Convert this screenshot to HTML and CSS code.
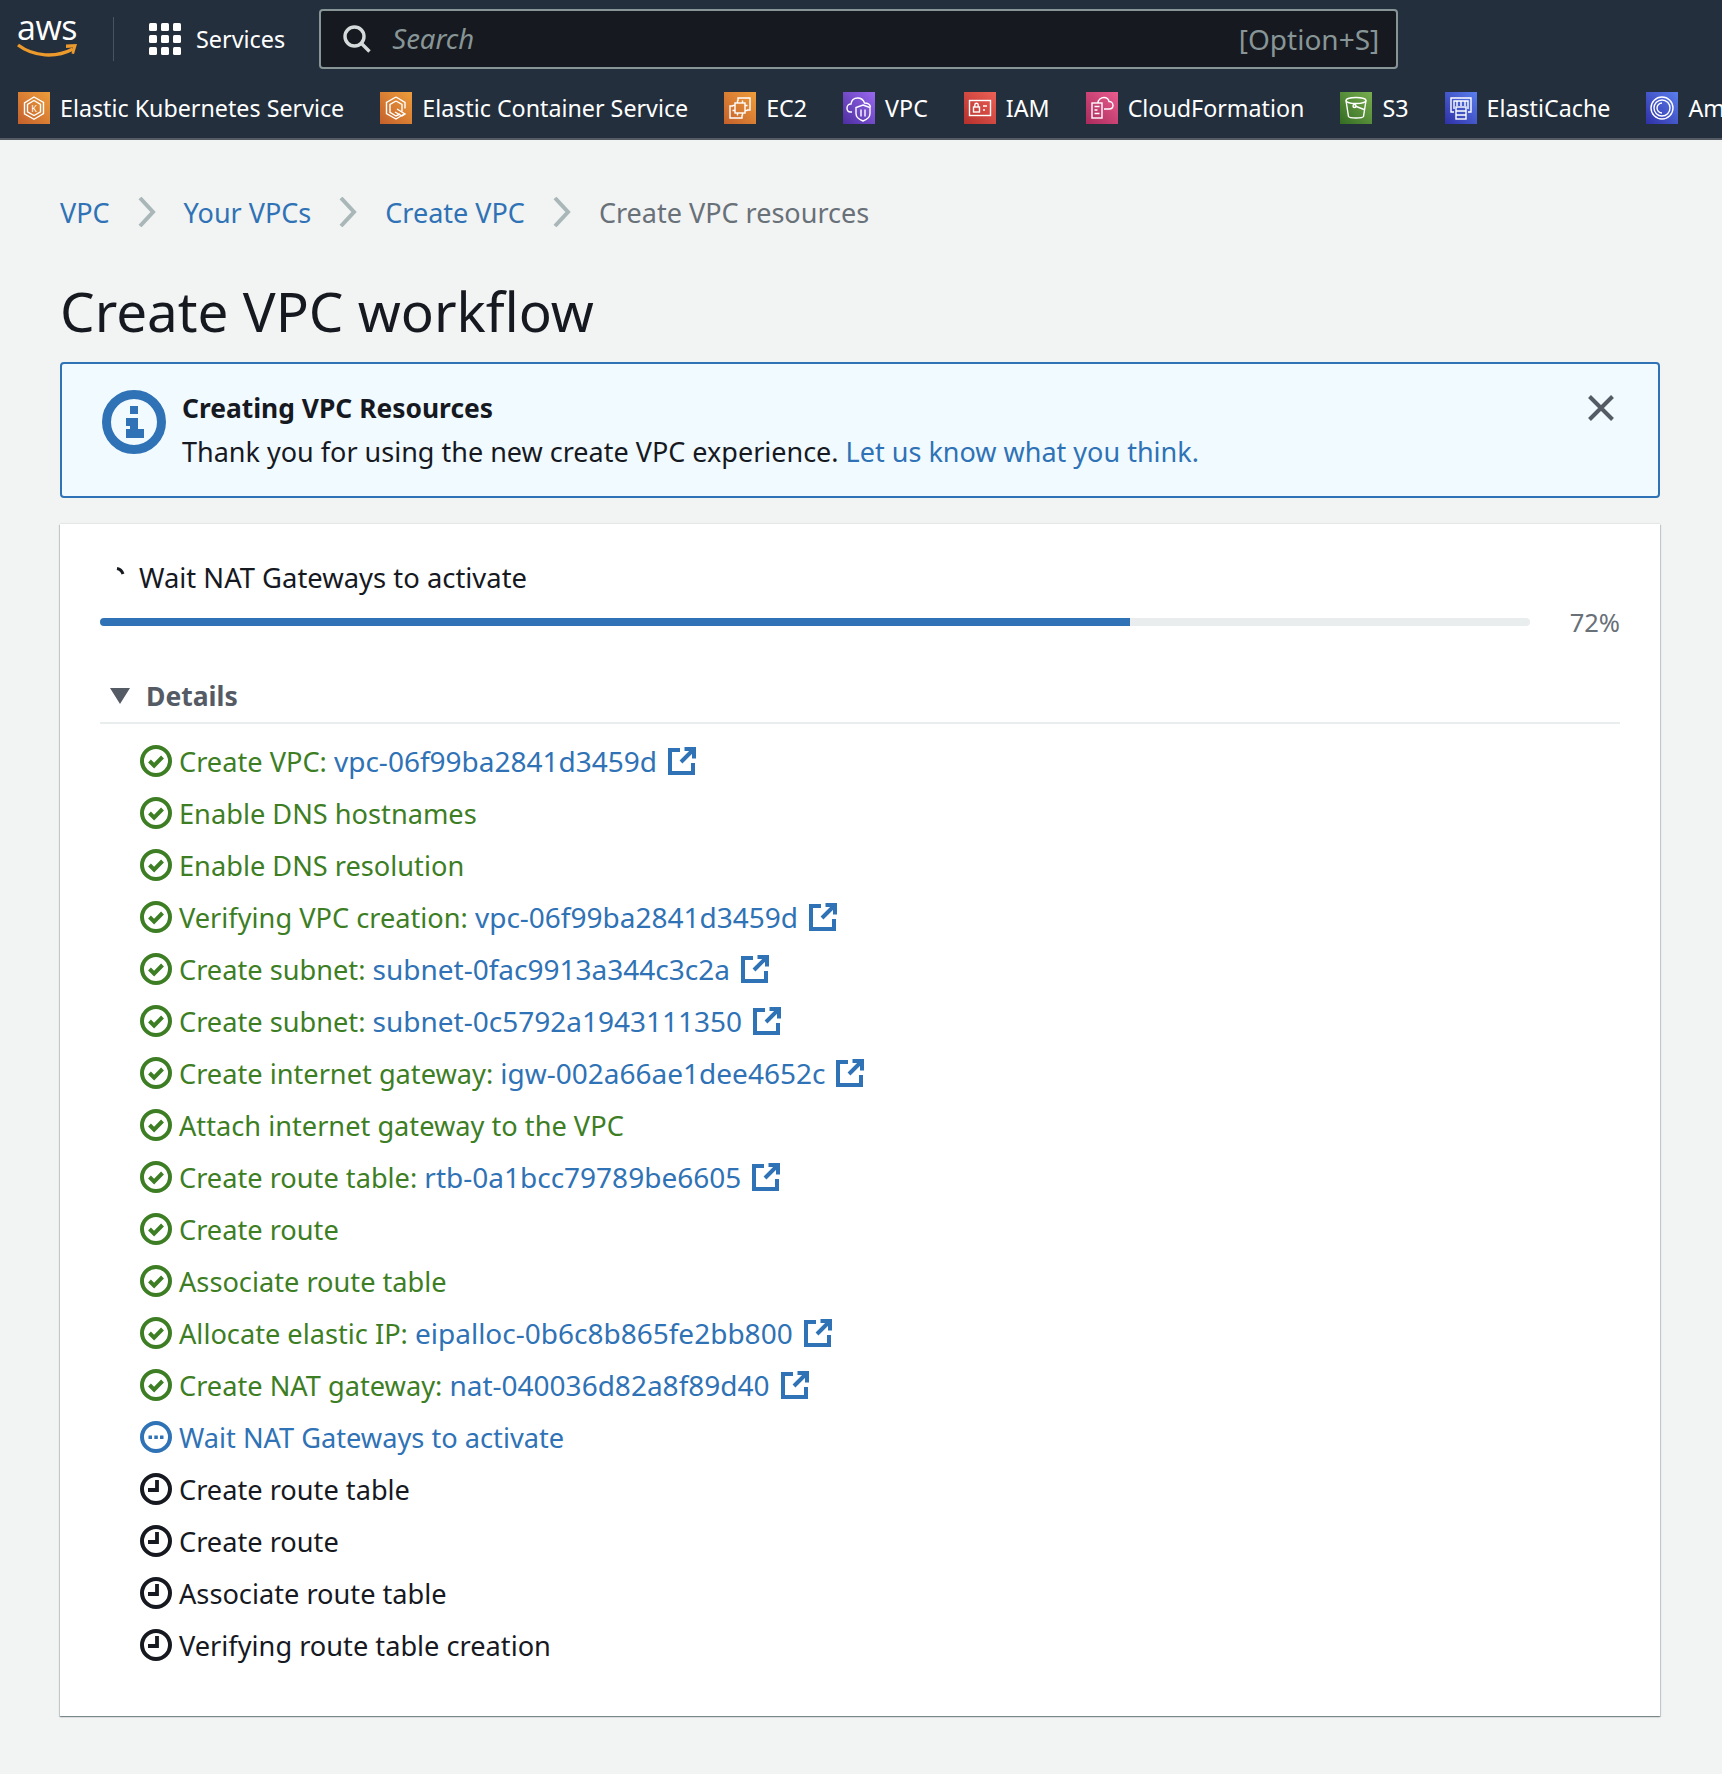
FILE: index.html
```html
<!DOCTYPE html>
<html lang="en">

<head>
  <meta charset="UTF-8">
  <title>Create VPC workflow</title>
  <link rel="stylesheet" href="styles.css">
</head>

<body>
  <svg class="defs" width="0" height="0">
    <symbol id="ok" viewBox="0 0 32 32">
      <circle cx="16" cy="16" r="14" fill="none" stroke="currentColor" stroke-width="4" />
      <path d="M9.5 16l4.6 4.6 8.4-8.6" fill="none" stroke="currentColor" stroke-width="4" />
    </symbol>
    <symbol id="wait" viewBox="0 0 32 32">
      <circle cx="16" cy="16" r="14" fill="none" stroke="currentColor" stroke-width="4" />
      <path d="M8.5 14.500h3.500v3.500h-3.500zM14.300 14.500h3.500v3.500h-3.500zM20 14.500h3.500v3.500h-3.500z" fill="currentColor" />
    </symbol>
    <symbol id="clock" viewBox="0 0 32 32">
      <circle cx="16" cy="16" r="14" fill="none" stroke="currentColor" stroke-width="4" />
      <path d="M17 7v10H8" fill="none" stroke="currentColor" stroke-width="3.8" />
    </symbol>
    <symbol id="ext" viewBox="0 0 28 28">
      <path d="M12 3H2v23h23V16" fill="none" stroke="currentColor" stroke-width="4" />
      <path d="M13 15L25 3M16.500 2H26v9.500" fill="none" stroke="currentColor" stroke-width="4" />
    </symbol>
  </svg>

  <header class="top">
    <div class="top-row">
      <a class="logo">
        <span class="logo-text">aws</span>
        <svg class="smile" viewBox="0 0 62 16" width="62" height="16">
          <path d="M1 2c16 12 38 13 55 4" fill="none" stroke="#ec9a2c" stroke-width="3.400" />
          <path d="M49 1.500l11-.5-3 10-2.500-.5 1.500-6-7 .5z" fill="#ec9a2c" />
        </svg>
      </a>
      <a class="services">
        <svg viewBox="0 0 32 32" width="32" height="32" fill="#fff">
          <rect x="0" y="0" width="8" height="8" rx="1.500" />
          <rect x="12" y="0" width="8" height="8" rx="1.500" />
          <rect x="24" y="0" width="8" height="8" rx="1.500" />
          <rect x="0" y="12" width="8" height="8" rx="1.500" />
          <rect x="12" y="12" width="8" height="8" rx="1.500" />
          <rect x="24" y="12" width="8" height="8" rx="1.500" />
          <rect x="0" y="24" width="8" height="8" rx="1.500" />
          <rect x="12" y="24" width="8" height="8" rx="1.500" />
          <rect x="24" y="24" width="8" height="8" rx="1.500" />
        </svg>
        <span>Services</span>
      </a>
      <div class="search">
        <svg viewBox="0 0 28 28" width="28" height="28" fill="none" stroke="#d5dbdb" stroke-width="3.400">
          <circle cx="11.500" cy="11.500" r="9.500" />
          <path d="M18 18l8.500 8.500" />
        </svg>
        <span class="search-text">Search</span>
        <span class="search-key">[Option+S]</span>
      </div>
    </div>

    <nav class="shortcuts">
      <a class="shortcut">
        <span class="svc orange">
          <svg viewBox="0 0 32 32" fill="none" stroke="#fff" stroke-width="1.400">
            <path d="M16 5l9.500 5.500v11L19 25.500l-3 1.800-9.500-5.500v-11z" />
            <path d="M16 8.500l6.500 3.800v7.500L16 23.500l-6.500-3.700v-7.500z" />
            <text x="16" y="19.500" class="svc-letter">K</text>
          </svg>
        </span>
        Elastic Kubernetes Service
      </a>
      <a class="shortcut">
        <span class="svc orange">
          <svg viewBox="0 0 32 32" fill="none" stroke="#fff" stroke-width="1.400">
            <path d="M16 5l9 5.500v6M25 21.500l-9 5.500-9.500-5.500v-11L16 5" />
            <path d="M16 9l6 3.500v7M20 22l-4 2-6-3.700v-7.800L16 9" />
            <path d="M17 17l8 5-3 2-7-4" />
          </svg>
        </span>
        Elastic Container Service
      </a>
      <a class="shortcut">
        <span class="svc orange">
          <svg viewBox="0 0 32 32" fill="none" stroke="#fff" stroke-width="1.400">
            <path d="M14 9V6h12v12h-3" />
            <path d="M9 14H6v12h12v-3" />
            <rect x="11" y="11" width="10" height="10" />
            <path d="M13.500 11V8.500M18.500 11V8.500M13.500 23.500V21M18.500 23.500V21M8.500 13.500H11M8.500 18.500H11M21 13.500h2.500M21 18.500h2.500" />
          </svg>
        </span>
        EC2
      </a>
      <a class="shortcut">
        <span class="svc purple">
          <svg viewBox="0 0 32 32" fill="none" stroke="#fff" stroke-width="1.400">
            <path d="M9 20H7.500C5 20 4 18 4 16c0-2 1.500-4 4-4 .5-3.500 3-6 6.500-6s6 2 7 5c3 0 5.500 1.500 6 4" />
            <path d="M20 13l7 2.500v6c0 3.500-3 6-7 7.500-4-1.500-7-4-7-7.500v-6z" />
            <path d="M18 17.500v7M22 17.500v7" />
          </svg>
        </span>
        VPC
      </a>
      <a class="shortcut">
        <span class="svc red">
          <svg viewBox="0 0 32 32" fill="none" stroke="#fff" stroke-width="1.400">
            <rect x="5.500" y="8.500" width="21" height="15" />
            <rect x="9.500" y="15" width="6" height="5" />
            <path d="M10.800 15v-2a1.700 1.700 0 0 1 3.400 0v2M19 14h4M19 18h2" />
          </svg>
        </span>
        IAM
      </a>
      <a class="shortcut">
        <span class="svc pink">
          <svg viewBox="0 0 32 32" fill="none" stroke="#fff" stroke-width="1.400">
            <rect x="6" y="11" width="10" height="15" />
            <path d="M8.500 14.500h5M8.500 18h3M8.500 21.500h5" />
            <path d="M12 11c0-3.500 3-5.500 6-5.500 2.500 0 4.500 1.500 5 4 2.500 0 4 2 4 4 0 2.500-2 3.500-4 3.500h-5" />
          </svg>
        </span>
        CloudFormation
      </a>
      <a class="shortcut">
        <span class="svc green">
          <svg viewBox="0 0 32 32" fill="none" stroke="#fff" stroke-width="1.400">
            <ellipse cx="16" cy="8.500" rx="10" ry="3" />
            <path d="M6 8.500l2.500 16c1 2 14 2 15 0L26 8.500" />
            <path d="M15 14l9 3.500" />
            <circle cx="14.500" cy="14" r="1.500" />
          </svg>
        </span>
        S3
      </a>
      <a class="shortcut">
        <span class="svc blue">
          <svg viewBox="0 0 32 32" fill="none" stroke="#fff" stroke-width="1.400">
            <path d="M9 20H6V6h20v14h-3" />
            <path d="M9 17V9h14v8M12 9v5M16 9v5M20 9v5" />
            <rect x="11" y="15" width="10" height="12" />
            <path d="M11 19h10M11 23h10" />
          </svg>
        </span>
        ElastiCache
      </a>
      <a class="shortcut">
        <span class="svc blue">
          <svg viewBox="0 0 32 32" fill="none" stroke="#fff" stroke-width="1.400">
            <circle cx="16" cy="16" r="11" />
            <circle cx="16" cy="16" r="8" />
            <path d="M16 11a5 5 0 0 0 0 10" />
          </svg>
        </span>
        Am
      </a>
    </nav>
  </header>

  <main class="page">
    <div class="crumbs">
      <a class="link">VPC</a>
      <svg class="chev" viewBox="0 0 18 30"><path d="M2 1l13 14L2 29" /></svg>
      <a class="link">Your VPCs</a>
      <svg class="chev" viewBox="0 0 18 30"><path d="M2 1l13 14L2 29" /></svg>
      <a class="link">Create VPC</a>
      <svg class="chev" viewBox="0 0 18 30"><path d="M2 1l13 14L2 29" /></svg>
      <span class="crumb-now">Create VPC resources</span>
    </div>

    <h1>Create VPC workflow</h1>

    <section class="banner">
      <svg class="banner-icon" viewBox="0 0 64 64">
        <circle cx="32" cy="32" r="27.500" fill="none" stroke="#2f72b5" stroke-width="9" />
        <path d="M28 16h8v8h-8zM24 28h12v11h6v9H24v-9h4v-3h-4z" fill="#2f72b5" />
      </svg>
      <div class="banner-body">
        <div class="banner-title">Creating VPC Resources</div>
        <div>Thank you for using the new create VPC experience. <a class="link">Let us know what you think.</a></div>
      </div>
      <svg class="close" viewBox="0 0 26 26"><path d="M1.500 1.500l23 23M24.500 1.500l-23 23" /></svg>
    </section>

    <section class="card">
      <div class="step-title">
        <svg class="spinner" viewBox="0 0 10 10"><path d="M1 1.500c3 .5 5 2.500 6 5.500" /></svg>
        Wait NAT Gateways to activate
      </div>
      <div class="progress">
        <div class="bar"><div class="bar-fill" style="width: 72%"></div></div>
        <span class="percent">72%</span>
      </div>
      <div class="details">
        <svg viewBox="0 0 20 16" width="20" height="16"><path d="M0 0h20L10 16z" fill="#545b64" /></svg>
        <span>Details</span>
      </div>

      <ul class="steps">
        <li class="done"><svg class="state"><use href="#ok" /></svg><span>Create VPC: <a class="link">vpc-06f99ba2841d3459d</a></span><svg class="ext"><use href="#ext" /></svg></li>
        <li class="done"><svg class="state"><use href="#ok" /></svg><span>Enable DNS hostnames</span></li>
        <li class="done"><svg class="state"><use href="#ok" /></svg><span>Enable DNS resolution</span></li>
        <li class="done"><svg class="state"><use href="#ok" /></svg><span>Verifying VPC creation: <a class="link">vpc-06f99ba2841d3459d</a></span><svg class="ext"><use href="#ext" /></svg></li>
        <li class="done"><svg class="state"><use href="#ok" /></svg><span>Create subnet: <a class="link">subnet-0fac9913a344c3c2a</a></span><svg class="ext"><use href="#ext" /></svg></li>
        <li class="done"><svg class="state"><use href="#ok" /></svg><span>Create subnet: <a class="link">subnet-0c5792a1943111350</a></span><svg class="ext"><use href="#ext" /></svg></li>
        <li class="done"><svg class="state"><use href="#ok" /></svg><span>Create internet gateway: <a class="link">igw-002a66ae1dee4652c</a></span><svg class="ext"><use href="#ext" /></svg></li>
        <li class="done"><svg class="state"><use href="#ok" /></svg><span>Attach internet gateway to the VPC</span></li>
        <li class="done"><svg class="state"><use href="#ok" /></svg><span>Create route table: <a class="link">rtb-0a1bcc79789be6605</a></span><svg class="ext"><use href="#ext" /></svg></li>
        <li class="done"><svg class="state"><use href="#ok" /></svg><span>Create route</span></li>
        <li class="done"><svg class="state"><use href="#ok" /></svg><span>Associate route table</span></li>
        <li class="done"><svg class="state"><use href="#ok" /></svg><span>Allocate elastic IP: <a class="link">eipalloc-0b6c8b865fe2bb800</a></span><svg class="ext"><use href="#ext" /></svg></li>
        <li class="done"><svg class="state"><use href="#ok" /></svg><span>Create NAT gateway: <a class="link">nat-040036d82a8f89d40</a></span><svg class="ext"><use href="#ext" /></svg></li>
        <li class="running"><svg class="state"><use href="#wait" /></svg><span>Wait NAT Gateways to activate</span></li>
        <li><svg class="state"><use href="#clock" /></svg><span>Create route table</span></li>
        <li><svg class="state"><use href="#clock" /></svg><span>Create route</span></li>
        <li><svg class="state"><use href="#clock" /></svg><span>Associate route table</span></li>
        <li><svg class="state"><use href="#clock" /></svg><span>Verifying route table creation</span></li>
      </ul>
    </section>
  </main>
</body>

</html>
```

FILE: styles.css
```css
* {
  margin: 0;
  padding: 0;
  box-sizing: border-box;
}

html,
body {
  height: 100%;
}

body {
  background: #f2f3f3;
  color: #16191f;
  font-family: "Noto Sans", Roboto, sans-serif;
  font-size: 27px;
  overflow-x: hidden;
}

.defs {
  position: absolute;
}

.link {
  color: #2f72b5;
}

/* top bar */
.top {
  background: #242f3e;
  height: 140px;
  border-bottom: 2px solid #545b64;
  color: #fff;
  white-space: nowrap;
  overflow: hidden;
}

.top-row {
  display: flex;
  align-items: center;
  height: 77px;
  padding: 0 0 0 17px;
}

.logo {
  position: relative;
  width: 62px;
  height: 44px;
  margin-right: 34px;
}

.logo-text {
  display: block;
  margin-top: -3px;
  font-family: "Open Sans", sans-serif;
  font-size: 34px;
  line-height: 26px;
  letter-spacing: -.5px;
}

.smile {
  position: absolute;
  left: 0;
  top: 26px;
}

.services {
  display: flex;
  align-items: center;
  gap: 15px;
  height: 44px;
  padding-left: 35px;
  border-left: 1px solid #4a5361;
  font-size: 23.400px;
}

.search {
  display: flex;
  align-items: center;
  width: 1079px;
  height: 60px;
  margin-left: 34px;
  padding: 0 17px 0 22px;
  background: #16191f;
  border: 2px solid #879596;
  border-radius: 4px;
  color: #879596;
}

.search-text {
  margin-left: 21px;
  font-style: italic;
  font-size: 27.500px;
}

.search-key {
  margin-left: auto;
  font-size: 28px;
}

.shortcuts {
  display: flex;
  gap: 36px;
  padding-left: 18px;
  margin-top: 15px;
  font-size: 23.250px;
}

.shortcut {
  display: flex;
  align-items: center;
  gap: 10px;
  height: 32px;
}

.svc {
  display: block;
  width: 32px;
  height: 32px;
}

.svc svg {
  display: block;
  width: 32px;
  height: 32px;
}

.svc-letter {
  fill: #fff;
  stroke: none;
  font-size: 9px;
  text-anchor: middle;
}

.orange {
  background: linear-gradient(45deg, #c4602c, #ee9d3b);
}

.purple {
  background: linear-gradient(45deg, #4c2ea0, #9a68f0);
}

.red {
  background: linear-gradient(45deg, #b5302c, #ec6156);
}

.pink {
  background: linear-gradient(45deg, #aa2a5c, #ea5c8e);
}

.green {
  background: linear-gradient(45deg, #336b22, #79ae4f);
}

.blue {
  background: linear-gradient(45deg, #2f30a6, #5a7fee);
}

/* page */
.page {
  padding: 56px 62px 0 60px;
}

.crumbs {
  display: flex;
  align-items: center;
  height: 32px;
  font-size: 27px;
}

.chev {
  width: 18px;
  height: 30px;
  margin: 0 28px 0 28px;
  fill: none;
  stroke: #aab7b8;
  stroke-width: 4;
}

.crumb-now {
  color: #687078;
}

h1 {
  font-size: 54.800px;
  font-weight: 400;
  line-height: 64px;
  margin: 51px 0 19px;
}

.banner {
  display: flex;
  height: 136px;
  padding: 26px 44px 0 40px;
  background: #f1faff;
  border: 2px solid #2f72b5;
  border-radius: 4px;
}

.banner-icon {
  flex: none;
  width: 64px;
  height: 64px;
}

.banner-body {
  flex: 1;
  margin: -4px 0 0 16px;
  line-height: 44px;
}

.banner-title {
  font-weight: 700;
  font-size: 26.400px;
}

.close {
  flex: none;
  width: 26px;
  height: 26px;
  margin-top: 5px;
  fill: none;
  stroke: #545b64;
  stroke-width: 4;
}

.card {
  height: 1192px;
  margin-top: 26px;
  padding: 0 40px;
  background: #fff;
  box-shadow: 0 1px 1px 0 rgba(0, 28, 36, .3), 1px 1px 1px 0 rgba(0, 28, 36, .15), -1px 1px 1px 0 rgba(0, 28, 36, .15), 0 -1px 1px 0 rgba(0, 28, 36, .05);
}

.step-title {
  position: relative;
  height: 38px;
  padding: 35px 0 0 39px;
  line-height: 38px;
  box-sizing: content-box;
  font-size: 27.400px;
}

.spinner {
  position: absolute;
  left: 16px;
  top: 43px;
  width: 10px;
  height: 10px;
  fill: none;
  stroke: #16191f;
  stroke-width: 3;
}

.progress {
  display: flex;
  align-items: center;
  height: 32px;
  margin-top: 9px;
}

.bar {
  flex: 1;
  height: 8px;
  background: #eaeded;
  border-radius: 4px;
  overflow: hidden;
}

.bar-fill {
  height: 8px;
  background: #2f72b5;
}

.percent {
  width: 90px;
  text-align: right;
  font-size: 25.500px;
  color: #687078;
}

.details {
  display: flex;
  align-items: center;
  gap: 16px;
  height: 54px;
  margin-top: 32px;
  padding-left: 10px;
  border-bottom: 2px solid #eaeded;
  color: #545b64;
  font-weight: 700;
  font-size: 26.500px;
}

.steps {
  list-style: none;
  margin: 11px 0 0 40px;
  font-size: 27.200px;
}

.steps li {
  display: flex;
  align-items: center;
  height: 52px;
  white-space: pre;
}

.steps .link {
  font-size: 28px;
}

.done {
  color: #3d7e24;
}

.running {
  color: #2f72b5;
}

.state {
  flex: none;
  width: 32px;
  height: 32px;
  margin-right: 7px;
}

.ext {
  flex: none;
  width: 28px;
  height: 28px;
  margin-left: 11px;
  color: #2f72b5;
}
```
